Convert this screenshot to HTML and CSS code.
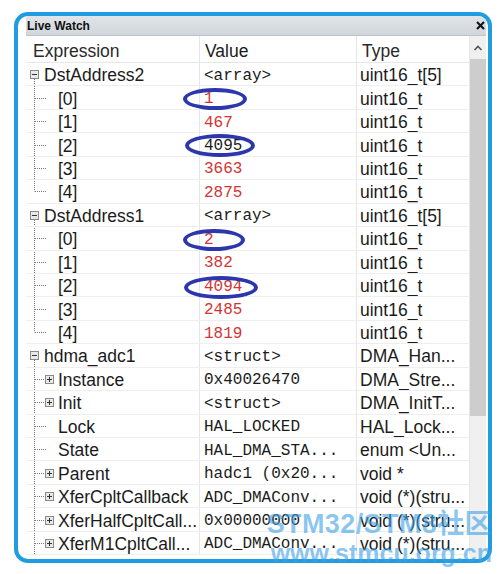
FILE: index.html
```html
<!DOCTYPE html>
<html>
<head>
<meta charset="utf-8">
<link rel="stylesheet" href="styles.css">
</head>
<body>
<svg class="sprite" xmlns="http://www.w3.org/2000/svg">
  <symbol id="g-top" viewBox="0 0 18 24">
    <path d="M8.5 17v7" stroke="#7a7a7a" stroke-dasharray="1 1" fill="none"/>
    <rect x="4.5" y="8.5" width="8" height="8" fill="#e9e9e9" stroke="#8a8a8a"/>
    <path d="M6 12.5h5" stroke="#333" fill="none"/>
  </symbol>
  <symbol id="g-mid" viewBox="0 0 32 24">
    <path d="M8.5 0v24M9 12.5h11" stroke="#7a7a7a" stroke-dasharray="1 1" fill="none"/>
  </symbol>
  <symbol id="g-last" viewBox="0 0 32 24">
    <path d="M8.5 0v12.5M9 12.5h11" stroke="#7a7a7a" stroke-dasharray="1 1" fill="none"/>
  </symbol>
  <symbol id="g-plus" viewBox="0 0 32 24">
    <path d="M8.5 0v24M9 12.5h10" stroke="#7a7a7a" stroke-dasharray="1 1" fill="none"/>
    <rect x="19.5" y="8.5" width="8" height="8" fill="#e9e9e9" stroke="#8a8a8a"/>
    <path d="M21 12.5h5M23.5 10v5" stroke="#333" fill="none"/>
  </symbol>
</svg>

<div class="frame">
  <div class="titlebar">
    <span class="title">Live Watch</span>
    <svg class="close" width="9" height="9" viewBox="0 0 9 9"><path d="M1 1l7 7M8 1l-7 7" stroke="#111" stroke-width="2"/></svg>
  </div>
  <div class="body">
    <div class="grid">
      <div class="row head"><div class="c c1">Expression</div><div class="c c2">Value</div><div class="c c3">Type</div></div>

      <div class="row"><div class="c c1"><svg class="g top"><use href="#g-top"/></svg>DstAddress2</div><div class="c c2">&lt;array&gt;</div><div class="c c3">uint16_t[5]</div></div>
      <div class="row"><div class="c c1"><svg class="g"><use href="#g-mid"/></svg>[0]</div><div class="c c2 red">1</div><div class="c c3">uint16_t</div><span class="mark m1"></span></div>
      <div class="row"><div class="c c1"><svg class="g"><use href="#g-mid"/></svg>[1]</div><div class="c c2 red">467</div><div class="c c3">uint16_t</div></div>
      <div class="row"><div class="c c1"><svg class="g"><use href="#g-mid"/></svg>[2]</div><div class="c c2">4095</div><div class="c c3">uint16_t</div><span class="mark m2"></span></div>
      <div class="row"><div class="c c1"><svg class="g"><use href="#g-mid"/></svg>[3]</div><div class="c c2 red">3663</div><div class="c c3">uint16_t</div></div>
      <div class="row"><div class="c c1"><svg class="g"><use href="#g-last"/></svg>[4]</div><div class="c c2 red">2875</div><div class="c c3">uint16_t</div></div>

      <div class="row"><div class="c c1"><svg class="g top"><use href="#g-top"/></svg>DstAddress1</div><div class="c c2">&lt;array&gt;</div><div class="c c3">uint16_t[5]</div></div>
      <div class="row"><div class="c c1"><svg class="g"><use href="#g-mid"/></svg>[0]</div><div class="c c2 red">2</div><div class="c c3">uint16_t</div><span class="mark m3"></span></div>
      <div class="row"><div class="c c1"><svg class="g"><use href="#g-mid"/></svg>[1]</div><div class="c c2 red">382</div><div class="c c3">uint16_t</div></div>
      <div class="row"><div class="c c1"><svg class="g"><use href="#g-mid"/></svg>[2]</div><div class="c c2 red">4094</div><div class="c c3">uint16_t</div><span class="mark m4"></span></div>
      <div class="row"><div class="c c1"><svg class="g"><use href="#g-mid"/></svg>[3]</div><div class="c c2 red">2485</div><div class="c c3">uint16_t</div></div>
      <div class="row"><div class="c c1"><svg class="g"><use href="#g-last"/></svg>[4]</div><div class="c c2 red">1819</div><div class="c c3">uint16_t</div></div>

      <div class="row"><div class="c c1"><svg class="g top"><use href="#g-top"/></svg>hdma_adc1</div><div class="c c2">&lt;struct&gt;</div><div class="c c3">DMA_Han...</div></div>
      <div class="row"><div class="c c1"><svg class="g"><use href="#g-plus"/></svg>Instance</div><div class="c c2">0x40026470</div><div class="c c3">DMA_Stre...</div></div>
      <div class="row"><div class="c c1"><svg class="g"><use href="#g-plus"/></svg>Init</div><div class="c c2">&lt;struct&gt;</div><div class="c c3">DMA_InitT...</div></div>
      <div class="row"><div class="c c1"><svg class="g"><use href="#g-mid"/></svg>Lock</div><div class="c c2">HAL_LOCKED</div><div class="c c3">HAL_Lock...</div></div>
      <div class="row"><div class="c c1"><svg class="g"><use href="#g-mid"/></svg>State</div><div class="c c2">HAL_DMA_STA...</div><div class="c c3">enum &lt;Un...</div></div>
      <div class="row"><div class="c c1"><svg class="g"><use href="#g-plus"/></svg>Parent</div><div class="c c2">hadc1 (0x20...</div><div class="c c3">void *</div></div>
      <div class="row"><div class="c c1"><svg class="g"><use href="#g-plus"/></svg>XferCpltCallback</div><div class="c c2">ADC_DMAConv...</div><div class="c c3">void (*)(stru...</div></div>
      <div class="row"><div class="c c1"><svg class="g"><use href="#g-plus"/></svg>XferHalfCpltCall...</div><div class="c c2">0x00000000</div><div class="c c3">void (*)(stru...</div></div>
      <div class="row"><div class="c c1"><svg class="g"><use href="#g-plus"/></svg>XferM1CpltCall...</div><div class="c c2">ADC_DMAConv...</div><div class="c c3">void (*)(stru...</div></div>
    </div>
    <div class="scrollbar">
      <svg class="arrow" width="16" height="22" viewBox="0 0 16 22"><path d="M4.5 14l3.5-3.5 3.5 3.5" stroke="#555" stroke-width="1.6" fill="none"/></svg>
      <div class="thumb"></div>
    </div>
  </div>
</div>

<div class="wm">
  <div class="wm1">STM32/STM8社区</div>
  <div class="wm2">www.stmcu.org.cn</div>
</div>
</body>
</html>
```

FILE: styles.css
```css
* { box-sizing: border-box; }

body {
  margin: 0;
  width: 500px;
  height: 574px;
  overflow: hidden;
  background: #ffffff;
  position: relative;
  font-family: "Liberation Sans", Arial, sans-serif;
  color: #1b1b1b;
}

.sprite { display: none; }

.frame {
  margin: 12px 0 0 14px;
  width: 478px;
  height: 551px;
  border: 4px solid #1f9de0;
  border-radius: 14px;
  padding: 0 2px 0 8px;
  overflow: hidden;
  background: #fff;
}

.titlebar {
  height: 20px;
  background: linear-gradient(#e1e5e9, #d1d6dc);
  border-bottom: 1px solid #bcc3cb;
  display: flex;
  align-items: center;
  justify-content: space-between;
  padding: 0 1px 0 1px;
}

.title {
  font-weight: bold;
  font-size: 12px;
  color: #111;
}

.close { display: block; }

.body {
  display: flex;
  height: calc(100% - 20px);
}

.grid {
  width: 444px;
  flex: none;
}

.row {
  position: relative;
  display: grid;
  grid-template-columns: 174px 157px 113px;
  height: 23.45px;
  border-bottom: 1px solid #eeeeee;
  font-size: 17.5px;
}

.row.head {
  height: 27px;
  border-bottom: 1px solid #e6e6e6;
  color: #2a2a2a;
}

.c {
  display: flex;
  align-items: center;
  white-space: nowrap;
  overflow: hidden;
  border-right: 1px solid #e6e6e6;
  padding-top: 3px;
}

.head .c { padding-top: 5px; }
.head .c1 { padding-left: 7px; }
.head .c2 { padding-left: 5px; font-family: "Liberation Sans", Arial, sans-serif; font-size: 17.5px; }
.head .c3 { padding-left: 5px; }

.c2 {
  padding-left: 4px;
  font-family: "Liberation Mono", "Courier New", monospace;
  font-size: 16px;
  color: #1b1b1b;
}

.c2.red { color: #d23434; }

.c3 { padding-left: 3px; }

.g {
  flex: none;
  width: 32px;
  height: 24px;
  margin-top: -3px;
}

.g.top { width: 18px; }

.mark {
  position: absolute;
  z-index: 1;
  border: 4px solid #2b37aa;
  border-radius: 50%;
}

.m1 { left: 157px; top: 1.5px; width: 64px; height: 22px; }
.m2 { left: 159px; top: 0.5px; width: 70px; height: 23px; }
.m3 { left: 157px; top: 2px; width: 62px; height: 22px; }
.m4 { left: 158px; top: 2px; width: 74px; height: 23px; }

.scrollbar {
  width: 16px;
  flex: none;
  background: #f0f0f0;
  display: flex;
  flex-direction: column;
}

.arrow { display: block; flex: none; }

.thumb {
  margin-top: 1px;
  height: 357px;
  background: #cdcdcd;
}

.wm {
  position: absolute;
  left: 258px;
  top: 511px;
  width: 234px;
  color: rgba(60, 160, 230, 0.6);
  font-weight: bold;
  line-height: 1;
  text-align: right;
  white-space: nowrap;
  font-family: "Liberation Sans", "Noto Sans CJK SC", sans-serif;
}

.wm1 {
  font-size: 27px;
  letter-spacing: 0.4px;
}

.wm2 {
  font-size: 25px;
  margin-top: 3px;
}
```
